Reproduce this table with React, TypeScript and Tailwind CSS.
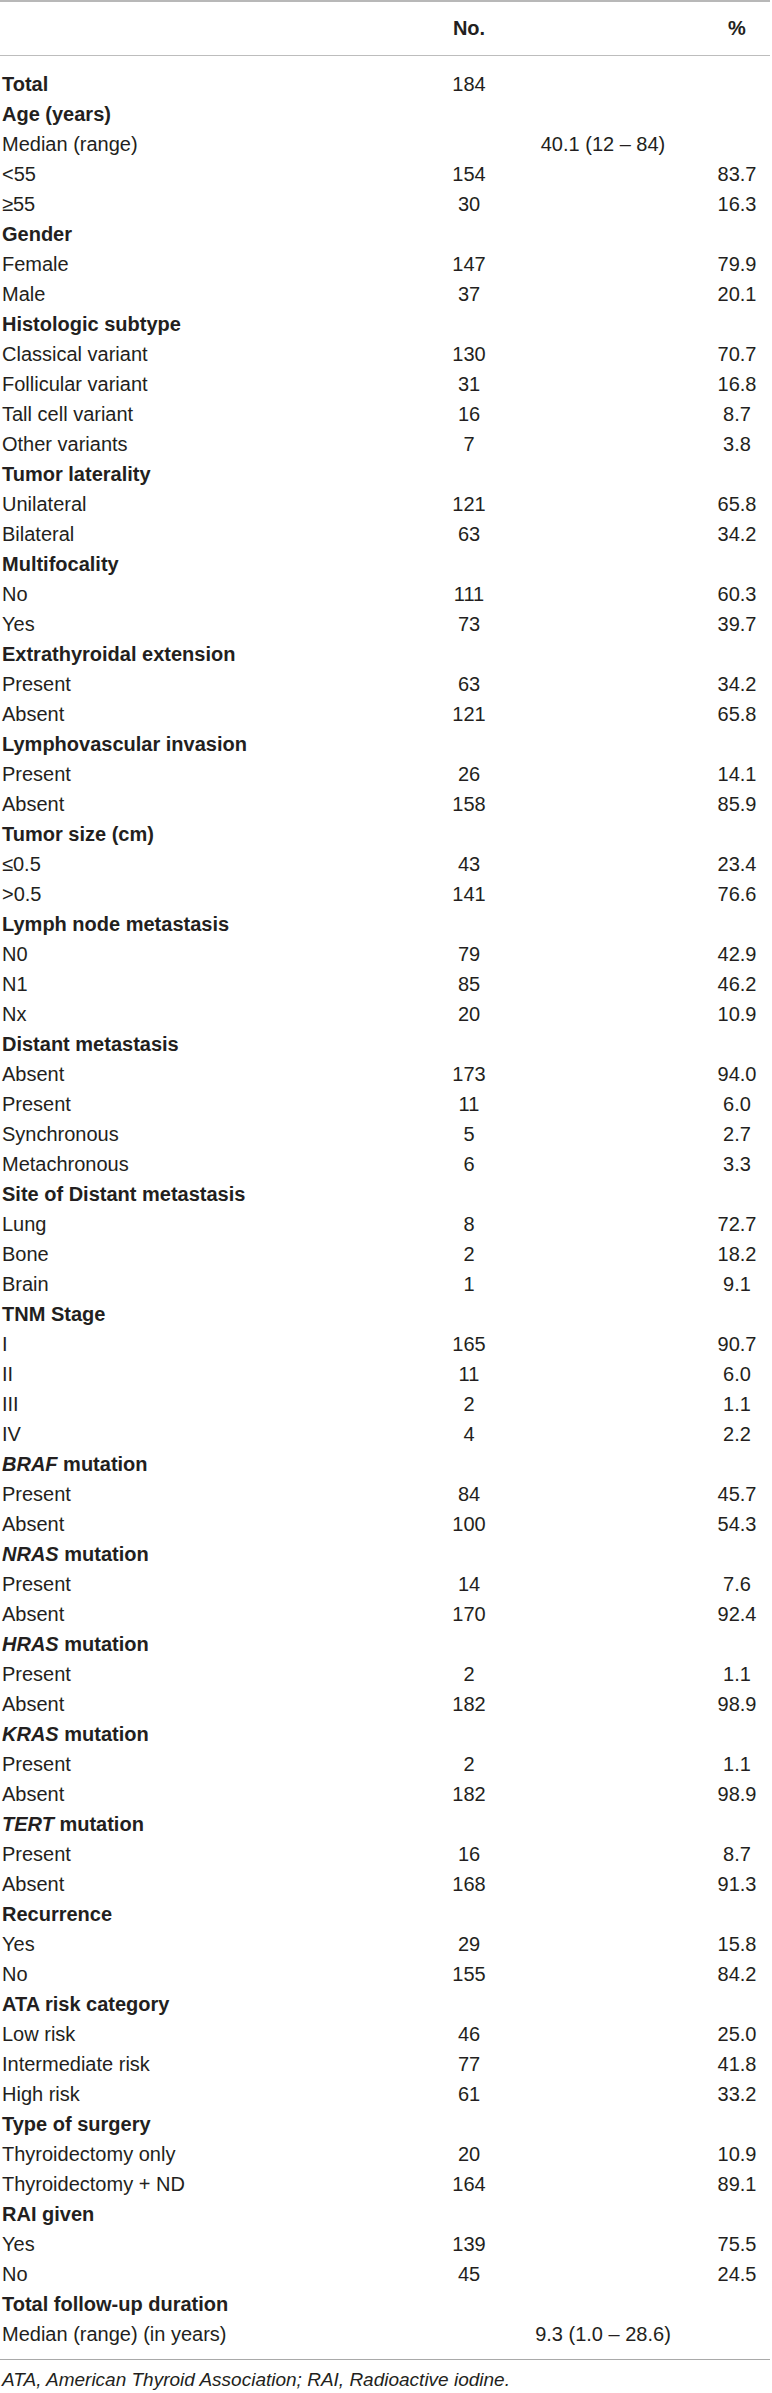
import React from 'react';

type Row =
  | { kind: 'head'; label: React.ReactNode }
  | { kind: 'row'; label: string; n?: string; pct?: string }
  | { kind: 'span'; label: string; value: string };

const h = (label: React.ReactNode): Row => ({ kind: 'head', label });
const r = (label: string, n?: string, pct?: string): Row => ({ kind: 'row', label, n, pct });
const gene = (name: string) => (
  <>
    <i>{name}</i> mutation
  </>
);

const rows: Row[] = [
  r('Total', '184'),
  h('Age (years)'),
  { kind: 'span', label: 'Median (range)', value: '40.1 (12 – 84)' },
  r('<55', '154', '83.7'),
  r('≥55', '30', '16.3'),
  h('Gender'),
  r('Female', '147', '79.9'),
  r('Male', '37', '20.1'),
  h('Histologic subtype'),
  r('Classical variant', '130', '70.7'),
  r('Follicular variant', '31', '16.8'),
  r('Tall cell variant', '16', '8.7'),
  r('Other variants', '7', '3.8'),
  h('Tumor laterality'),
  r('Unilateral', '121', '65.8'),
  r('Bilateral', '63', '34.2'),
  h('Multifocality'),
  r('No', '111', '60.3'),
  r('Yes', '73', '39.7'),
  h('Extrathyroidal extension'),
  r('Present', '63', '34.2'),
  r('Absent', '121', '65.8'),
  h('Lymphovascular invasion'),
  r('Present', '26', '14.1'),
  r('Absent', '158', '85.9'),
  h('Tumor size (cm)'),
  r('≤0.5', '43', '23.4'),
  r('>0.5', '141', '76.6'),
  h('Lymph node metastasis'),
  r('N0', '79', '42.9'),
  r('N1', '85', '46.2'),
  r('Nx', '20', '10.9'),
  h('Distant metastasis'),
  r('Absent', '173', '94.0'),
  r('Present', '11', '6.0'),
  r('Synchronous', '5', '2.7'),
  r('Metachronous', '6', '3.3'),
  h('Site of Distant metastasis'),
  r('Lung', '8', '72.7'),
  r('Bone', '2', '18.2'),
  r('Brain', '1', '9.1'),
  h('TNM Stage'),
  r('I', '165', '90.7'),
  r('II', '11', '6.0'),
  r('III', '2', '1.1'),
  r('IV', '4', '2.2'),
  h(gene('BRAF')),
  r('Present', '84', '45.7'),
  r('Absent', '100', '54.3'),
  h(gene('NRAS')),
  r('Present', '14', '7.6'),
  r('Absent', '170', '92.4'),
  h(gene('HRAS')),
  r('Present', '2', '1.1'),
  r('Absent', '182', '98.9'),
  h(gene('KRAS')),
  r('Present', '2', '1.1'),
  r('Absent', '182', '98.9'),
  h(gene('TERT')),
  r('Present', '16', '8.7'),
  r('Absent', '168', '91.3'),
  h('Recurrence'),
  r('Yes', '29', '15.8'),
  r('No', '155', '84.2'),
  h('ATA risk category'),
  r('Low risk', '46', '25.0'),
  r('Intermediate risk', '77', '41.8'),
  r('High risk', '61', '33.2'),
  h('Type of surgery'),
  r('Thyroidectomy only', '20', '10.9'),
  r('Thyroidectomy + ND', '164', '89.1'),
  h('RAI given'),
  r('Yes', '139', '75.5'),
  r('No', '45', '24.5'),
  h('Total follow-up duration'),
  { kind: 'span', label: 'Median (range) (in years)', value: '9.3 (1.0 – 28.6)' },
];

const grid = 'grid grid-cols-[436px_66px_202px_66px] leading-[30px]';

export default function App() {
  return (
    <div className="w-[772px] bg-white text-[#231f20] font-['Liberation_Sans',Arial,sans-serif] text-[20px]">
      <div className="w-[770px] border-t-2 border-[#b8b8b8]">
        {/* column header */}
        <div className={`${grid} pt-[11px] pb-[12px] border-b border-[#bdbdbd] font-bold`}>
          <div />
          <div className="text-center">No.</div>
          <div />
          <div className="text-center">%</div>
        </div>

        <div className="pt-[13px] pb-[10px] border-b border-[#a9a9a9]">
          {rows.map((row, i) => {
            if (row.kind === 'head') {
              return (
                <div key={i} className={grid}>
                  <div className="col-span-4 pl-[2px] font-bold">{row.label}</div>
                </div>
              );
            }
            if (row.kind === 'span') {
              return (
                <div key={i} className={grid}>
                  <div className="pl-[2px]">{row.label}</div>
                  <div className="col-span-3 text-center">{row.value}</div>
                </div>
              );
            }
            return (
              <div key={i} className={grid}>
                <div className={`pl-[2px] ${row.label === 'Total' ? 'font-bold' : ''}`}>{row.label}</div>
                <div className="text-center">{row.n}</div>
                <div />
                <div className="text-center">{row.pct}</div>
              </div>
            );
          })}
        </div>

        <p className="pt-[8px] pl-[2px] text-[19px] leading-[24px] italic">
          ATA, American Thyroid Association; RAI, Radioactive iodine.
        </p>
      </div>
    </div>
  );
}
